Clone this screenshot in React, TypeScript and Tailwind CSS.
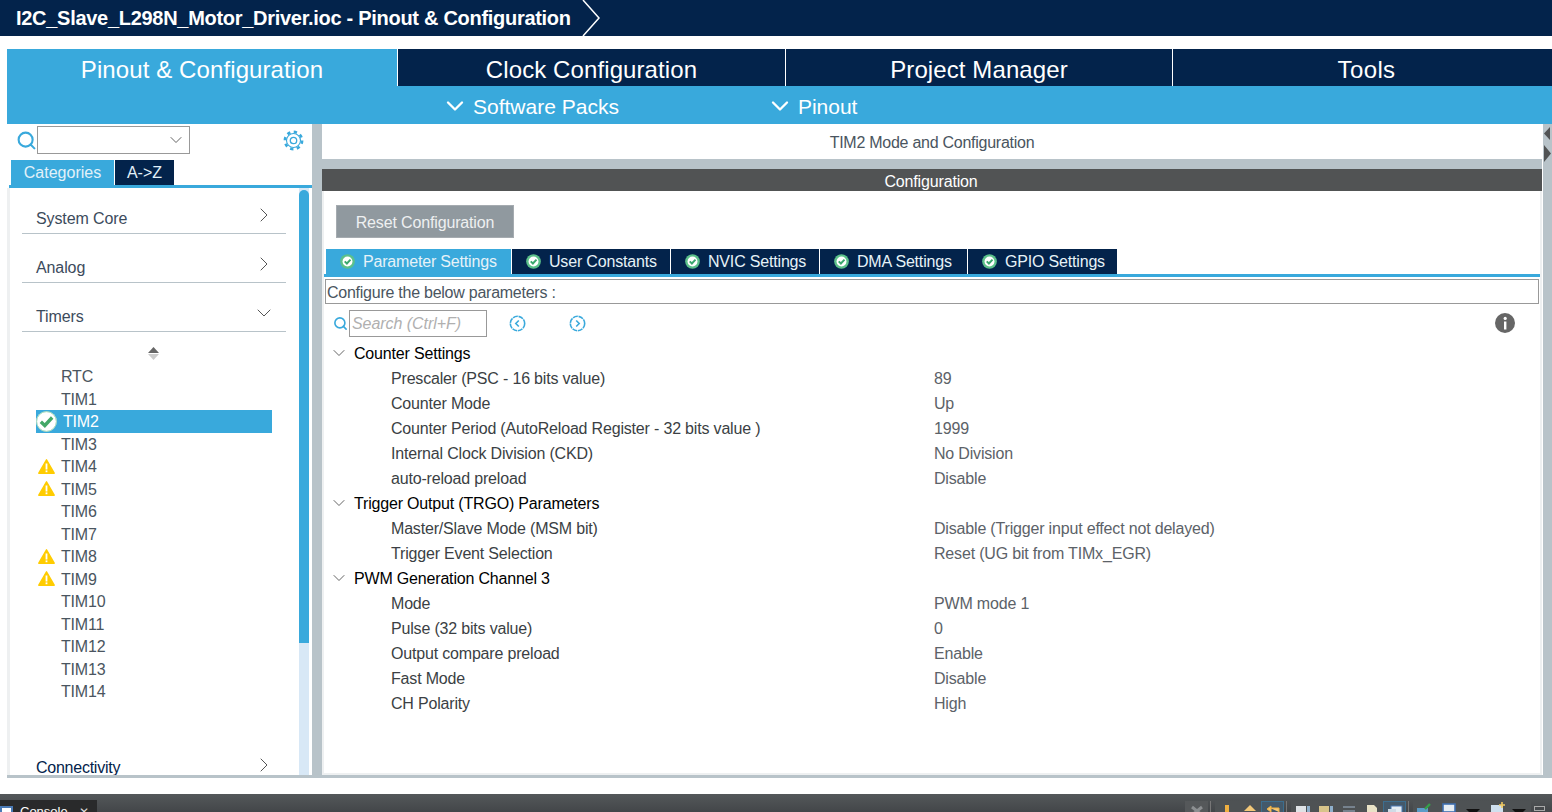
import { ChevronDown, ChevronRight, Search } from 'lucide-react';

const timers = [
  { name: 'RTC' },
  { name: 'TIM1' },
  { name: 'TIM2', state: 'ok' },
  { name: 'TIM3' },
  { name: 'TIM4', state: 'warn' },
  { name: 'TIM5', state: 'warn' },
  { name: 'TIM6' },
  { name: 'TIM7' },
  { name: 'TIM8', state: 'warn' },
  { name: 'TIM9', state: 'warn' },
  { name: 'TIM10' },
  { name: 'TIM11' },
  { name: 'TIM12' },
  { name: 'TIM13' },
  { name: 'TIM14' },
];

const groups = [
  {
    title: 'Counter Settings',
    rows: [
      ['Prescaler (PSC - 16 bits value)', '89'],
      ['Counter Mode', 'Up'],
      ['Counter Period (AutoReload Register - 32 bits value )', '1999'],
      ['Internal Clock Division (CKD)', 'No Division'],
      ['auto-reload preload', 'Disable'],
    ],
  },
  {
    title: 'Trigger Output (TRGO) Parameters',
    rows: [
      ['Master/Slave Mode (MSM bit)', 'Disable (Trigger input effect not delayed)'],
      ['Trigger Event Selection', 'Reset (UG bit from TIMx_EGR)'],
    ],
  },
  {
    title: 'PWM Generation Channel 3',
    rows: [
      ['Mode', 'PWM mode 1'],
      ['Pulse (32 bits value)', '0'],
      ['Output compare preload', 'Enable'],
      ['Fast Mode', 'Disable'],
      ['CH Polarity', 'High'],
    ],
  },
];

const configTabs = ['User Constants', 'NVIC Settings', 'DMA Settings', 'GPIO Settings'];

function CheckBadge() {
  return (
    <svg width="21" height="21" viewBox="0 0 20 20" className="shrink-0">
      <circle cx="10" cy="10" r="9.8" fill="#fff" />
      <circle cx="10" cy="10" r="9.4" fill="none" stroke="#8fd0a8" strokeWidth="0.8" />
      <path d="M4.6 10.2 L8.4 13.8 L15.4 6.2" fill="none" stroke="#43a868" strokeWidth="3.2" />
    </svg>
  );
}

function TabBadge() {
  return (
    <svg width="15" height="15" viewBox="0 0 20 20" className="shrink-0">
      <circle cx="10" cy="10" r="9.8" fill="#5cc08a" />
      <circle cx="10" cy="10" r="6.6" fill="#fff" />
      <path d="M6.3 9.8 L9.2 12.7 L14 7.5" fill="none" stroke="#3aa76d" strokeWidth="2.6" />
    </svg>
  );
}

function Warn() {
  return (
    <svg width="17" height="15" viewBox="0 0 17 15" className="shrink-0">
      <path d="M8.5 0.8 L16.2 14.2 L0.8 14.2 Z" fill="#ffcc00" stroke="#ffcc00" strokeWidth="1.4" strokeLinejoin="round" />
      <rect x="7.6" y="4.5" width="1.8" height="6" fill="#fff" />
      <rect x="7.6" y="11.4" width="1.8" height="1.8" fill="#fff" />
    </svg>
  );
}

function Gear() {
  return (
    <svg width="21" height="21" viewBox="0 0 21 21" className="ml-[93px]">
      <circle cx="10.5" cy="10.5" r="8.6" fill="none" stroke="#39a9dc" strokeWidth="2.6" strokeDasharray="3.3 3.45" />
      <circle cx="10.5" cy="10.5" r="7" fill="#fff" stroke="#39a9dc" strokeWidth="1.1" />
      <circle cx="10.5" cy="10.5" r="3.2" fill="none" stroke="#39a9dc" strokeWidth="1.3" />
    </svg>
  );
}

function NavCircle({ dir }: { dir: 'l' | 'r' }) {
  return (
    <svg width="17" height="17" viewBox="0 0 17 17">
      <circle cx="8.5" cy="8.5" r="7.2" fill="none" stroke="#39a9dc" strokeWidth="1.6" strokeDasharray="5 0.8" />
      <path d={dir === 'l' ? 'M9.8 5.5 L6.8 8.5 L9.8 11.5' : 'M7.2 5.5 L10.2 8.5 L7.2 11.5'} fill="none" stroke="#39a9dc" strokeWidth="1.6" />
    </svg>
  );
}

function CategoryRow({ label, open }: { label: string; open?: boolean }) {
  return (
    <div className="mr-[13px] flex h-[31px] shrink-0 items-center justify-between border-b border-[#b8c3c9] pl-[14px] pr-[10px]">
      <span className="pt-[2px] text-[16px] tracking-[-0.1px] text-[#3c4b5c]">{label}</span>
      {open ? (
        <ChevronDown size={24} strokeWidth={1} className="-mt-[6px] text-[#555]" />
      ) : (
        <ChevronRight size={24} strokeWidth={1} className="-mt-[6px] text-[#555]" />
      )}
    </div>
  );
}

// Bouton de la barre Eclipse : seul le haut de l'icone depasse de la fenetre
function ToolBtn({ children, active, className = '' }: { children?: React.ReactNode; active?: boolean; className?: string }) {
  return (
    <div
      className={`flex h-[11px] w-[23px] shrink-0 justify-center overflow-hidden ${
        active ? 'border border-b-0 border-[#3c6e8f] bg-[#44596a]' : ''
      } ${className}`}
    >
      <svg width="18" height="11" viewBox="0 0 18 11" className="shrink-0">
        {children}
      </svg>
    </div>
  );
}

function Sep() {
  return <div className="mx-[2px] h-[11px] w-px shrink-0 bg-[#777]" />;
}

export default function App() {
  return (
    <div className="flex h-[812px] w-[1552px] flex-col overflow-hidden bg-white font-['Liberation_Sans',Arial,sans-serif]">
      {/* Fil d'ariane */}
      <div className="flex h-9 shrink-0 items-center bg-[#03234b] pl-4">
        <span className="text-[20px] font-bold tracking-[-0.29px] text-white">
          I2C_Slave_L298N_Motor_Driver.ioc - Pinout &amp; Configuration
        </span>
        <svg width="20" height="36" viewBox="0 0 20 36" className="ml-[11px]">
          <path d="M1 0 L17 18 L1 36" fill="none" stroke="#fff" strokeWidth="1.5" />
        </svg>
      </div>

      <div className="ml-[7px] mt-[13px] flex min-h-0 flex-1 flex-col">
        {/* Onglets */}
        <div className="flex h-[37px] shrink-0 text-[24px] tracking-[0.1px] text-white">
          <div className="flex w-[390px] items-center justify-center bg-[#39a9dc] pt-[4px]">Pinout &amp; Configuration</div>
          <div className="ml-px flex w-[387px] items-center justify-center bg-[#03234b] pt-[4px]">Clock Configuration</div>
          <div className="ml-px flex w-[386px] items-center justify-center bg-[#03234b] pt-[4px]">Project Manager</div>
          <div className="ml-px flex flex-1 items-center justify-center bg-[#03234b] pl-[8px] pt-[4px] tracking-[0.4px]">Tools</div>
        </div>

        {/* Sous-menu */}
        <div className="flex h-[38px] shrink-0 items-center bg-[#39a9dc] pl-[434px] pt-[3px] text-[21px] text-white">
          <ChevronDown size={28} strokeWidth={2} className="-mt-[2px]" />
          <span className="ml-[4px]">Software Packs</span>
          <ChevronDown size={28} strokeWidth={2} className="-mt-[2px] ml-[147px]" />
          <span className="ml-[4px]">Pinout</span>
        </div>

        <div className="flex h-[654px] shrink-0 border-b-[3px] border-[#b8c3c9]">
          {/* Colonne gauche */}
          <aside className="flex w-[305px] shrink-0 flex-col overflow-hidden">
            <div className="flex h-[32px] shrink-0 items-center pl-[9px]">
              <Search size={21} strokeWidth={2.4} className="text-[#39a9dc]" />
              <div className="flex h-[28px] w-[153px] items-center justify-end border border-[#999] pr-[3px]">
                <ChevronDown size={20} strokeWidth={1.1} className="text-[#555]" />
              </div>
              <Gear />
            </div>
            <div className="ml-[2px] mt-[4px] flex h-[28px] shrink-0 items-stretch border-b-[3px] border-[#39a9dc] pl-[2px] text-[16px] text-[#e2f1f9]">
              <div className="flex w-[103px] items-center justify-center bg-[#39a9dc]">Categories</div>
              <div className="ml-px flex w-[59px] items-center justify-center bg-[#03234b]">A-&gt;Z</div>
            </div>
            <div className="flex min-h-0 flex-1 border-l-[3px] border-[#eef0f1]">
              <div className="flex min-w-0 flex-1 flex-col overflow-hidden pl-[12px] pt-[15px]">
                <CategoryRow label="System Core" />
                <div className="h-[18px] shrink-0" />
                <CategoryRow label="Analog" />
                <div className="h-[18px] shrink-0" />
                <CategoryRow label="Timers" open />
                <div className="flex h-[28px] shrink-0 items-end justify-center pr-[15px]">
                  <svg width="11" height="13" viewBox="0 0 11 13">
                    <path d="M5.5 0 L11 6 L0 6 Z" fill="#666" />
                    <path d="M5.5 13 L11 7 L0 7 Z" fill="#ccc" />
                  </svg>
                </div>
                <div className="mt-[5px] flex shrink-0 flex-col pl-[14px] text-[16px] tracking-[-0.2px]">
                  {timers.map((t) => (
                    <div
                      key={t.name}
                      className={`flex h-[22.5px] w-[236px] items-center ${t.state === 'ok' ? 'bg-[#39a9dc] text-white' : 'text-[#4a5560]'}`}
                    >
                      <span className="mr-[4px] flex w-[21px] shrink-0 items-center justify-center">
                        {t.state === 'ok' && <CheckBadge />}
                        {t.state === 'warn' && <Warn />}
                      </span>
                      <span className={t.state === 'ok' ? 'ml-[2px] pt-[2px]' : 'pt-[2px]'}>{t.name}</span>
                    </div>
                  ))}
                </div>
                <div className="mr-[13px] mt-[52px] flex h-[27px] shrink-0 items-center justify-between pl-[14px] pr-[10px]">
                  <span className="text-[16px] tracking-[-0.25px] text-[#03234b]">Connectivity</span>
                  <ChevronRight size={24} strokeWidth={1} className="-mt-[6px] text-[#555]" />
                </div>
              </div>
              {/* Ascenseur */}
              <div className="mr-[3px] w-[10px] shrink-0 bg-[#d8e8f6]">
                <div className="mt-[2px] h-[453px] rounded-t-[5px] bg-[#39a9dc]" />
              </div>
            </div>
          </aside>

          <div className="w-[10px] shrink-0 bg-[#b8c3c9]" />

          {/* Panneau principal */}
          <main className="flex w-[1220px] shrink-0 flex-col">
            <div className="flex h-[35px] shrink-0 items-center justify-center pt-[2px] text-[16px] tracking-[-0.26px] text-[#4a5560]">
              TIM2 Mode and Configuration
            </div>
            <div className="h-[10px] shrink-0 bg-[#b8c3c9]" />
            <div className="flex h-[22px] shrink-0 items-center justify-center bg-[#515354] pr-[2px] pt-[3px] text-[16px] tracking-[-0.15px] text-white">
              Configuration
            </div>
            <div className="flex min-h-0 flex-1 flex-col border-x-2 border-b-2 border-[#eef0f1]">
              <div className="ml-[12px] mt-[14px] flex h-[33px] w-[178px] shrink-0 items-center justify-center border border-[#a5abb0] bg-[#90999f] pt-[2px] text-[16px] tracking-[-0.15px] text-[#eef0f1]">
                Reset Configuration
              </div>
              <div className="mt-[11px] flex h-[28px] shrink-0 border-b-[3px] border-[#39a9dc] pl-[2px] text-[16px] tracking-[-0.18px] text-[#e6f2f8]">
                <div className="flex w-[185px] items-center gap-[8px] bg-[#39a9dc] pl-[14px]">
                  <TabBadge />
                  Parameter Settings
                </div>
                {configTabs.map((tab, i) => (
                  <div
                    key={tab}
                    className={`ml-px flex items-center gap-[8px] bg-[#03234b] pl-[14px] ${['w-[158px]', 'w-[148px]', 'w-[147px]', 'w-[149px]'][i]}`}
                  >
                    <TabBadge />
                    {tab}
                  </div>
                ))}
              </div>
              <div className="ml-px mr-px mt-[2px] flex h-[25px] shrink-0 items-center border border-[#999] pl-px pt-[2px] text-[16px] tracking-[-0.25px] text-[#4a5560]">
                Configure the below parameters :
              </div>
              <div className="mt-[5px] flex h-[28px] shrink-0 items-center pl-[9px]">
                <Search size={15} strokeWidth={2.6} className="text-[#39a9dc]" />
                <div className="ml-px flex h-[27px] w-[138px] items-center border border-[#999] pl-[2px] pt-[2px] text-[16px] italic tracking-[-0.05px] text-[#b0b0b0]">
                  Search (Ctrl+F)
                </div>
                <span className="ml-[22px] flex">
                  <NavCircle dir="l" />
                </span>
                <span className="ml-[43px] flex">
                  <NavCircle dir="r" />
                </span>
                <svg width="20" height="20" viewBox="0 0 20 20" className="ml-[909px]">
                  <circle cx="10" cy="10" r="10" fill="#666" />
                  <rect x="9" y="8.5" width="2.4" height="8" fill="#fff" />
                  <circle cx="10.2" cy="5.4" r="1.6" fill="#fff" />
                </svg>
              </div>
              <div className="mt-[4px] text-[16px] leading-[25px] tracking-[-0.18px]">
                {groups.map((g) => (
                  <div key={g.title}>
                    <div className="flex h-[25px] items-center pl-[5px] text-black">
                      <ChevronDown size={20} strokeWidth={1.1} className="-mt-[2px] text-[#555]" />
                      <span className="ml-[5px]">{g.title}</span>
                    </div>
                    {g.rows.map(([label, value]) => (
                      <div key={label} className="flex h-[25px] items-center">
                        <span className="ml-[67px] w-[543px] shrink-0 text-[#3b3f44]">{label}</span>
                        <span className="text-[#5c6268]">{value}</span>
                      </div>
                    ))}
                  </div>
                ))}
              </div>
            </div>
          </main>

          {/* Bord droit */}
          <div className="relative ml-px min-w-0 flex-1 bg-[#b8c3c9]">
            <svg width="9" height="40" viewBox="0 0 9 40" className="absolute left-0 top-0">
              <path d="M7 3 L1 9.5 L7 16 Z" fill="#515354" />
              <path d="M1 21 L8 29.5 L1 38 Z" fill="#515354" />
            </svg>
          </div>
        </div>
      </div>

      {/* Barre basse */}
      <div className="mt-[16px] flex h-[18px] shrink-0 items-end justify-between bg-gradient-to-b from-[#54585a] to-[#434649]">
        <div className="flex h-[12px] w-[97px] items-start overflow-hidden bg-[#292a2b]">
          <span className="mt-[6px] h-[12px] w-[13px] shrink-0 border-2 border-[#4a7ab5] bg-white" />
          <span className="ml-[7px] mt-[5px] text-[13px] leading-[14px] text-white">Console</span>
          <span className="ml-[11px] mt-[5px] text-[12px] leading-[14px] text-[#ddd]">✕</span>
        </div>
        <div className="flex h-[11px] items-start overflow-hidden pr-[7px]">
          <ToolBtn className="bg-[#55585a]">
            <path d="M4 6 L14 14 M14 6 L4 14" stroke="#8c8f91" strokeWidth="3" />
          </ToolBtn>
          <Sep />
          <div className="ml-[2px] flex bg-[#4e5254]">
            <ToolBtn>
              <path d="M9 4 L9 11" stroke="#f0b040" strokeWidth="4" />
            </ToolBtn>
            <ToolBtn>
              <path d="M9 4 L15 10 L3 10 Z" fill="#f3c878" />
            </ToolBtn>
            <ToolBtn active>
              <path d="M3 7 L7 4 L7 10 Z M6 6 L15 6 L15 10" fill="#f3c878" stroke="#f0b040" strokeWidth="1" />
            </ToolBtn>
          </div>
          <Sep />
          <div className="ml-[2px] flex bg-[#4e5254]">
            <ToolBtn>
              <rect x="2" y="5" width="10" height="6" fill="#dfe3e6" />
              <rect x="13" y="5" width="3" height="6" fill="#8fb0cc" />
            </ToolBtn>
            <ToolBtn>
              <rect x="2" y="5" width="10" height="6" fill="#d8c48a" />
              <rect x="13" y="5" width="3" height="6" fill="#8fb0cc" />
            </ToolBtn>
            <ToolBtn>
              <path d="M3 6 L15 6 M3 10 L15 10" stroke="#9fb3c8" strokeWidth="1" />
            </ToolBtn>
            <ToolBtn>
              <path d="M4 4 L11 4 L14 7 L14 11 L4 11 Z" fill="#e9e2c6" />
            </ToolBtn>
            <ToolBtn active>
              <rect x="5" y="4" width="11" height="7" fill="#e6edf3" stroke="#4a7ab5" />
              <rect x="2" y="7" width="8" height="4" fill="#cfdbe6" />
            </ToolBtn>
          </div>
          <Sep />
          <div className="ml-[2px] flex bg-[#4e5254]">
            <ToolBtn className="-ml-px">
              <rect x="2" y="7" width="11" height="4" fill="#5b9cc8" />
              <path d="M10 8 L15 3" stroke="#35a04a" strokeWidth="2.4" />
            </ToolBtn>
            <ToolBtn className="w-[27px]">
              <rect x="3" y="3" width="12" height="8" fill="#e6edf3" stroke="#3f6fb0" strokeWidth="1.6" />
            </ToolBtn>
            <ToolBtn className="w-[15px]">
              <path d="M1 8 L15 8 L8 15 Z" fill="#111" />
            </ToolBtn>
            <ToolBtn>
              <rect x="3" y="4" width="12" height="7" fill="#cfe0ee" />
              <path d="M14 1 L14 7 M11 4 L17 4" stroke="#efc860" strokeWidth="1.6" />
            </ToolBtn>
            <ToolBtn className="w-[15px]">
              <path d="M1 8 L15 8 L8 15 Z" fill="#111" />
            </ToolBtn>
          </div>
          <div className="ml-[3px] mt-[5px] h-[5px] w-[11px] border border-[#aaa]" />
        </div>
      </div>
    </div>
  );
}
